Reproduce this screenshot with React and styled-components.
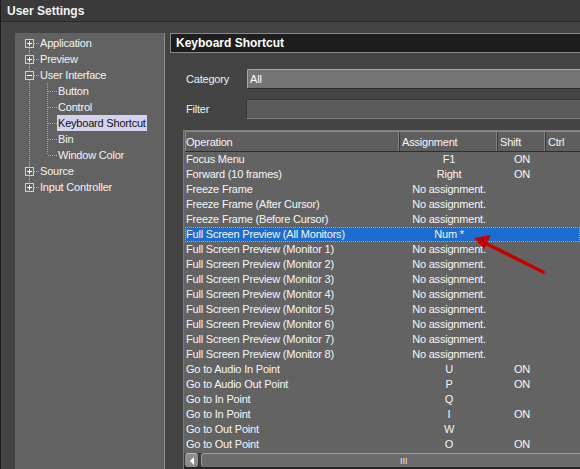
import styled, { createGlobalStyle } from "styled-components";

const GlobalStyle = createGlobalStyle`
  html, body {
    margin: 0;
    padding: 0;
    background: #444444;
  }
  body {
    font-family: "Liberation Sans", Arial, sans-serif;
    font-size: 11px;
    letter-spacing: -0.2px;
  }
`;

const Window = styled.div`
  position: relative;
  width: 580px;
  height: 469px;
  overflow: hidden;
  background: #444444;
  display: flex;
  flex-direction: column;
  border-left: 1px solid #1c1c1c;
  box-sizing: border-box;
`;

const TitleBar = styled.div`
  height: 21px;
  flex: none;
  background: #3a3a3a;
  border-bottom: 1px solid #262626;
  color: #f2f2f2;
  font-weight: bold;
  font-size: 12px;
  letter-spacing: 0;
  display: flex;
  align-items: center;
  padding-left: 6px;
`;

const Body = styled.div`
  flex: 1;
  display: flex;
  padding: 11px 0 0 14px;
  min-height: 0;
`;

const TreePanel = styled.div`
  width: 150px;
  flex: none;
  background: #626262;
  border-right: 1px solid #8e8e8e;
  padding: 2px 0 0 6px;
  box-sizing: border-box;
  color: #f4f4f4;
`;

const TreeRow = styled.div`
  height: 16px;
  display: flex;
  align-items: center;
`;

const TreeLabel = styled.span`
  height: 16px;
  line-height: 16px;
  padding: 0 1px;
  white-space: nowrap;
  background: ${(p) => (p.$selected ? "#d3d3ee" : "transparent")};
  color: ${(p) => (p.$selected ? "#111111" : "#f4f4f4")};
`;

const Content = styled.div`
  flex: 1;
  margin-left: 5px;
  display: flex;
  flex-direction: column;
  min-width: 0;
`;

const SectionHeader = styled.div`
  height: 18px;
  flex: none;
  background: #1d1d1d;
  border: 1px solid #8a8a8a;
  border-right: none;
  color: #ffffff;
  font-weight: bold;
  font-size: 12px;
  letter-spacing: 0;
  display: flex;
  align-items: center;
  padding-left: 5px;
`;

const FieldRow = styled.div`
  display: flex;
  align-items: center;
  height: 20px;
  margin-top: ${(p) => p.$top}px;
  padding-left: 16px;
  color: #f0f0f0;
`;

const FieldLabel = styled.span`
  width: ${(p) => p.$w}px;
  flex: none;
`;

const Combo = styled.div`
  flex: 1;
  height: 18px;
  background: #757575;
  border-top: 1px solid #a8a8a8;
  border-left: 1px solid #a8a8a8;
  border-bottom: 1px solid #2a2a2a;
  border-radius: 2px 0 0 2px;
  display: flex;
  align-items: center;
  padding-left: 2px;
  color: #ffffff;
`;

const FilterInput = styled.div`
  flex: 1;
  height: 18px;
  background: #5b5b5b;
  border-top: 1px solid #383838;
  border-left: 1px solid #383838;
  border-bottom: 1px solid #7c7c7c;
`;

const Table = styled.div`
  margin: 11px 0 0 13px;
  flex: 1;
  background: #636363;
  border-top: 1px solid #7c7c7c;
  border-left: 1px solid #7c7c7c;
  display: flex;
  flex-direction: column;
  color: #f6f6f6;
`;

const Grid = styled.div`
  display: grid;
  grid-template-columns: 215px 98px 48px 80px;
  height: ${(p) => p.$h}px;
  flex: none;
  align-items: center;
  white-space: nowrap;
`;

const HeaderRow = styled(Grid)`
  background: #5e5e5e;
  border-top: 1px solid #8c8c8c;
  border-bottom: 1px solid #2e2e2e;
  margin-left: 1px;
  align-items: stretch;
`;

const HeaderCell = styled.div`
  display: flex;
  align-items: center;
  padding-left: ${(p) => (p.$first ? 0 : 2)}px;
  border-right: 1px solid #3a3a3a;
  box-shadow: inset -2px 0 0 -1px #828282;
  border-left: ${(p) => (p.$first ? "1px solid #8c8c8c" : "none")};
`;

const DataRow = styled(Grid)`
  margin-left: 1px;
  background: ${(p) => (p.$selected ? "#1c6dd0" : "transparent")};
  outline: ${(p) => (p.$selected ? "1px dotted #e0a040" : "none")};
  outline-offset: -1px;
`;

const Cell = styled.div`
  padding-left: ${(p) => (p.$center ? 0 : 1)}px;
  text-align: ${(p) => (p.$center ? "center" : "left")};
  line-height: 15px;
`;

const ScrollBar = styled.div`
  margin-top: 1px;
  height: 14px;
  flex: none;
  display: flex;
  align-items: stretch;
  background: #3a3a3a;
  padding-left: 1px;
`;

const ScrollButton = styled.div`
  width: 13px;
  background: #8c8c8c;
  border-top: 1px solid #b8b8b8;
  border-radius: 3px;
  display: flex;
  align-items: center;
  justify-content: center;
  box-sizing: border-box;
`;

const ScrollThumb = styled.div`
  flex: 1;
  margin-left: 3px;
  background: #6b6b6b;
  border-top: 1px solid #9c9c9c;
  border-left: 1px solid #9c9c9c;
  border-radius: 3px 0 0 3px;
  display: flex;
  align-items: center;
  padding-left: 198px;
  color: #e8e8e8;
  font-size: 9px;
  letter-spacing: 0;
  box-sizing: border-box;
`;

const TableBottom = styled.div`
  flex: 1;
  background: #262626;
`;

const ArrowOverlay = styled.svg`
  position: absolute;
  left: 0;
  top: 0;
  pointer-events: none;
`;

const Expander = ({ open, first, last }) => (
  <svg width="18" height="16" style={{ flex: "none" }}>
    {!first && <line x1="8.5" y1="0" x2="8.5" y2="4" stroke="#a8a8a8" strokeDasharray="1 1" />}
    {!last && <line x1="8.5" y1="13" x2="8.5" y2="16" stroke="#a8a8a8" strokeDasharray="1 1" />}
    <rect x="4.5" y="4.5" width="8" height="8" fill="none" stroke="#cfcfcf" />
    <line x1="6" y1="8.5" x2="11" y2="8.5" stroke="#ffffff" />
    {!open && <line x1="8.5" y1="6" x2="8.5" y2="11" stroke="#ffffff" />}
    <line x1="13" y1="8.5" x2="18" y2="8.5" stroke="#a8a8a8" strokeDasharray="1 1" />
  </svg>
);

const Guide = ({ branch, last }) => (
  <svg width="18" height="16" style={{ flex: "none" }}>
    <line x1="8.5" y1="0" x2="8.5" y2={branch && last ? 8 : 16} stroke="#a8a8a8" strokeDasharray="1 1" />
    {branch && <line x1="9" y1="8.5" x2="18" y2="8.5" stroke="#a8a8a8" strokeDasharray="1 1" />}
  </svg>
);

const tree = [
  { label: "Application" },
  { label: "Preview" },
  { label: "User Interface", open: true },
  { label: "Button", child: true },
  { label: "Control", child: true },
  { label: "Keyboard Shortcut", child: true, selected: true },
  { label: "Bin", child: true },
  { label: "Window Color", child: true, last: true },
  { label: "Source" },
  { label: "Input Controller", last: true },
];

const NA = "No assignment.";

const rows = [
  ["Focus Menu", "F1", "ON"],
  ["Forward (10 frames)", "Right", "ON"],
  ["Freeze Frame", NA, ""],
  ["Freeze Frame (After Cursor)", NA, ""],
  ["Freeze Frame (Before Cursor)", NA, ""],
  ["Full Screen Preview (All Monitors)", "Num *", "", true],
  ["Full Screen Preview (Monitor 1)", NA, ""],
  ["Full Screen Preview (Monitor 2)", NA, ""],
  ["Full Screen Preview (Monitor 3)", NA, ""],
  ["Full Screen Preview (Monitor 4)", NA, ""],
  ["Full Screen Preview (Monitor 5)", NA, ""],
  ["Full Screen Preview (Monitor 6)", NA, ""],
  ["Full Screen Preview (Monitor 7)", NA, ""],
  ["Full Screen Preview (Monitor 8)", NA, ""],
  ["Go to Audio In Point", "U", "ON"],
  ["Go to Audio Out Point", "P", "ON"],
  ["Go to In Point", "Q", ""],
  ["Go to In Point", "I", "ON"],
  ["Go to Out Point", "W", ""],
  ["Go to Out Point", "O", "ON"],
];

const App = () => {
  return (
    <Window>
      <GlobalStyle />
      <TitleBar>User Settings</TitleBar>
      <Body>
        <TreePanel>
          {tree.map((item, i) => (
            <TreeRow key={item.label}>
              {item.child ? (
                <>
                  <Guide />
                  <Guide branch last={item.last} />
                </>
              ) : (
                <Expander open={item.open} first={i === 0} last={item.last} />
              )}
              <TreeLabel $selected={item.selected}>{item.label}</TreeLabel>
            </TreeRow>
          ))}
        </TreePanel>
        <Content>
          <SectionHeader>Keyboard Shortcut</SectionHeader>
          <FieldRow $top={16}>
            <FieldLabel $w={61}>Category</FieldLabel>
            <Combo>All</Combo>
          </FieldRow>
          <FieldRow $top={10}>
            <FieldLabel $w={60}>Filter</FieldLabel>
            <FilterInput />
          </FieldRow>
          <Table>
            <HeaderRow $h={19}>
              <HeaderCell $first>Operation</HeaderCell>
              <HeaderCell>Assignment</HeaderCell>
              <HeaderCell>Shift</HeaderCell>
              <HeaderCell>Ctrl</HeaderCell>
            </HeaderRow>
            {rows.map(([op, key, shift, selected], i) => (
              <DataRow key={i} $h={15} $selected={selected}>
                <Cell>{op}</Cell>
                <Cell $center>{key}</Cell>
                <Cell $center>{shift}</Cell>
                <Cell />
              </DataRow>
            ))}
            <ScrollBar>
              <ScrollButton>
                <svg width="6" height="8">
                  <polygon points="5,0 5,8 1,4" fill="#ffffff" />
                </svg>
              </ScrollButton>
              <ScrollThumb>III</ScrollThumb>
            </ScrollBar>
            <TableBottom />
          </Table>
        </Content>
      </Body>
      <ArrowOverlay width="580" height="469">
        <line x1="542" y1="272" x2="482" y2="242" stroke="#c40000" strokeWidth="3.5" strokeLinecap="round" />
        <polygon points="473,238 490,235 483,249" fill="#c40000" />
      </ArrowOverlay>
    </Window>
  );
};

export default App;
